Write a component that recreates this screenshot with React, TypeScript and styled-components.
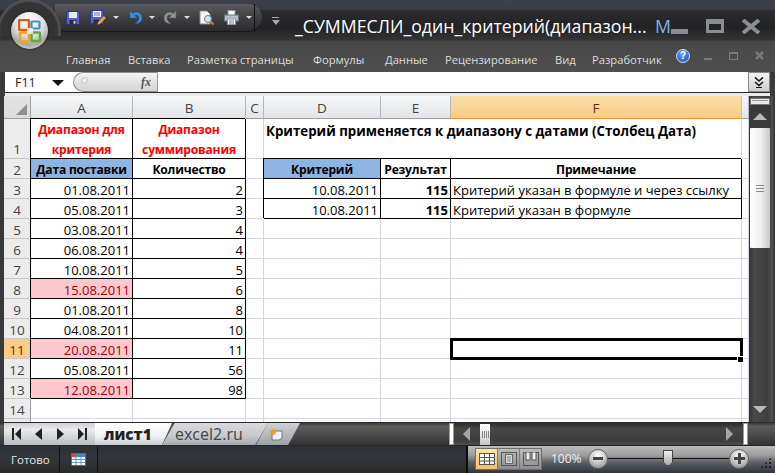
import React from "react";
import styled, { createGlobalStyle, css } from "styled-components";

const Global = createGlobalStyle`
  html, body { margin: 0; padding: 0; background: #333; }
  * { box-sizing: border-box; }
`;

const Win = styled.div`
  position: relative; width: 775px; height: 473px; overflow: hidden;
  display: flex; flex-direction: column; background: #3a3a3a;
  font-family: "Open Sans", "Noto Sans", sans-serif;
`;
const TitleBar = styled.div`
  height: 40px; flex: none; display: flex; align-items: flex-start; padding: 4px 0 0 55px;
  background: linear-gradient(#3c4149 0, #3a3f47 22%, #2a2b2e 28%, #232325 70%, #343436 100%);
`;
const Qat = styled.div`
  position: relative; width: 207px; height: 28px; display: flex; align-items: center;
  border-radius: 0 14px 14px 14px / 0 14px 14px 6px;
  background: linear-gradient(#5a5a5c, #3e3e40 55%, #2c2c2e);
  border-bottom: 1px solid #161616; padding-left: 11px;
`;
const QatSep = styled.i`
  position: absolute; left: 199px; top: 0; bottom: 0; width: 1px; background: #111;
`;
const QatIcon = styled.span<{ $gap?: number }>`
  display: inline-flex; margin-right: ${(p) => p.$gap ?? 0}px;
`;
const Caret = styled.i<{ $gap: number; $c?: string }>`
  width: 0; height: 0; margin-right: ${(p) => p.$gap}px;
  border-left: 3px solid transparent; border-right: 3px solid transparent;
  border-top: 3px solid ${(p) => p.$c ?? "#ddd"};
`;
const Customize = styled.div`
  width: 9px; margin: 13px 0 0 9px; display: flex; flex-direction: column; gap: 2px; align-items: center;
  &::before { content: ""; width: 7px; height: 1px; background: #aaa; }
  &::after { content: ""; border-left: 4px solid transparent; border-right: 4px solid transparent; border-top: 5px solid #aaa; }
`;
const Title = styled.div`
  margin: 10px 0 0 15px; width: 360px; white-space: nowrap; color: #fff; font-size: 17.7px; line-height: 24px;
`;
const TitleM = styled.span`
  margin: 10px 0 0 0; color: #7db4ee; font-size: 17.7px; line-height: 24px;
`;
const WinButtons = styled.div`
  margin-left: 0; display: flex; align-items: flex-start; color: #8a8f96;
`;
const MinBtn = styled.i`
  width: 17px; height: 5px; margin: 25px 18px 0 0; background: #888d94;
`;
const MaxBtn = styled.i`
  width: 18px; height: 14px; margin: 15px 18px 0 0; border: 3px solid #888d94; border-top-width: 5px;
`;
const Ribbon = styled.div`
  height: 32px; flex: none; position: relative; display: flex; align-items: center; padding: 6px 0 0 66px;
  background: linear-gradient(#484848, #4e4e4e);
  border-top: 1px solid #3c3c3c;
`;
const RibbonTab = styled.span<{ $w: number }>`
  width: ${(p) => p.$w}px; color: #dcdcdc; font-family: "Open Sans", sans-serif; font-size: 11.2px; white-space: nowrap;
`;
const RibbonCtl = styled.div`
  display: flex; align-items: center; margin: -8px 0 0 7px; gap: 0;
`;
const Help = styled.span`
  width: 14px; height: 14px; border-radius: 50%; background: radial-gradient(circle at 40% 30%, #6a9ff0, #1a4fb8);
  border: 1px solid #cfe0ff; color: #fff; font: bold 10px/12px "Liberation Sans", sans-serif; text-align: center; margin-right: 14px;
`;
const SmallMin = styled.i`width: 8px; height: 2px; background: #77797c; margin: 7px 17px 0 0;`;
const SmallRestore = styled.i`width: 9px; height: 8px; border: 1px solid #77797c; border-top-width: 2px; margin: 0 17px 0 0;`;
const FormulaBar = styled.div`
  height: 21px; flex: none; display: flex; margin: 0 5px; background: #fff; align-items: stretch;
  border-bottom: 1px solid #2d2d2d;
`;
const NameBox = styled.div`
  width: 68px; flex: none; display: flex; align-items: center; justify-content: space-between; padding: 1px 9px 0 10px;
  font-size: 12.5px; color: #222;
`;
const NameCaret = styled.i`
  border-left: 6px solid transparent; border-right: 6px solid transparent; border-top: 6px solid #111; margin-top: 1px;
`;
const FxPill = styled.div`
  width: 85px; flex: none; display: flex; align-items: center; justify-content: space-between; padding: 0 6px 0 7px;
  border-radius: 11px 0 0 11px; border: 1px solid #8d8d8d; border-right: 1px solid #9a9a9a;
  background: linear-gradient(#f4f4f4, #d4d4d4);
`;
const FxDot = styled.i`
  width: 7px; height: 7px; border-radius: 50%; background: radial-gradient(circle, #fff, #b5b5b5); margin-top: -4px;
`;
const Fx = styled.span`
  font: italic bold 12px "Liberation Serif", serif; color: #555;
`;
const FormulaInput = styled.div`flex: 1;`;
const Expand = styled.div`
  width: 22px; flex: none; background: linear-gradient(#f2f2f2, #cfcfcf); border: 1px solid #888;
  display: flex; align-items: center; justify-content: center;
`;
const Strip = styled.div`height: 3px; flex: none; margin: 0 5px; background: #e9edf2;`;
const SheetRow = styled.div`
  height: 326px; flex: none; display: flex; padding-left: 4px;
`;
const Grid = styled.div`
  width: 745px; height: 326px; overflow: hidden; background: #fff; display: grid;
  grid-template-columns: 27px 102px 113px 18px 117px 70px 291px 7px;
  grid-template-rows: 23px 40px repeat(14, 20px);
  font-family: "Open Sans", sans-serif; font-size: 13px; color: #000;
`;
const Corner = styled.div`
  background: linear-gradient(#e4e4e4, #dcdcdc); border-right: 1px solid #9e9e9e; border-bottom: 1px solid #9e9e9e;
  display: flex; align-items: flex-end; justify-content: flex-end; padding: 0 3px 3px 0;
`;
const ColHead = styled.div<{ $active?: boolean }>`
  display: flex; align-items: center; justify-content: center; font-size: 13.5px; color: #444; padding-top: 1px;
  background: linear-gradient(#f6f7f8, #e2e4e7); border-right: 1px solid #b4b8be; border-bottom: 1px solid #9e9e9e;
  ${(p) => p.$active && css`
    background: linear-gradient(#fadfa8, #f7cb84); border-right-color: #f5b868; border-bottom-color: #f29536; color: #6b2a10;
  `}
`;
const RowHead = styled.div<{ $active?: boolean; $tall?: boolean }>`
  display: flex; align-items: ${(p) => (p.$tall ? "flex-end" : "center")}; justify-content: center; font-size: 13.5px; color: #444; padding-top: 2px;
  background: #ececec; border-right: 1px solid #9e9e9e; border-bottom: 1px solid #c6c6c6;
  ${(p) => p.$active && css`background: #f8cd85; border-right-color: #f29536; color: #6b2a10;`}
`;
const Cell = styled.div<{
  $boxed?: boolean; $align?: string; $bold?: boolean; $fill?: string; $color?: string; $sel?: boolean; $span?: number;
}>`
  display: flex; align-items: center; white-space: nowrap; padding: 2px 2px 0; line-height: 20px;
  justify-content: ${(p) => (p.$align === "right" ? "flex-end" : p.$align === "center" ? "center" : "flex-start")};
  text-align: center;
  border-right: 1px solid #d0d7e5; border-bottom: 1px solid #d0d7e5;
  ${(p) => p.$span && css`grid-column: span ${p.$span};`}
  ${(p) => p.$bold && css`font-weight: 700; font-size: 12.1px; letter-spacing: -0.2px;`}
  ${(p) => p.$fill && css`background: ${p.$fill};`}
  ${(p) => p.$color && css`color: ${p.$color};`}
  ${(p) => p.$boxed && css`
    border-right-color: #000; border-bottom-color: #000; box-shadow: -1px -1px 0 #000; position: relative;
  `}
  ${(p) => p.$sel && css`
    position: relative; z-index: 1; border: 2px solid #000; box-shadow: 0 0 0 1px #000;
  `}
`;
const SheetHeading = styled(Cell)`
  align-items: flex-start; padding: 2px 0 0 2px; font-weight: 700; font-size: 13.3px;
`;
const BoldNum = styled(Cell)`font-weight: 700;`;
const Handle = styled.i`
  position: absolute; right: -3px; bottom: -5px; width: 5px; height: 5px; background: #000; box-shadow: 0 0 0 1px #fff;
`;
const VScroll = styled.div`
  width: 26px; flex: none; display: flex; flex-direction: column; align-items: center; padding-right: 4px;
  background: linear-gradient(90deg, #333 0, #4a4a4a 20%, #3e3e3e 70%, #505050 90%, #2c2c2c 100%);
`;
const VSplit = styled.div`
  width: 20px; height: 7px; margin-top: 2px; background: #e8e8e8; border: 1px solid #777; flex: none;
  &::after { content: ""; display: block; height: 1px; margin: 1px 1px; background: #9a9a9a; }
`;
const VUp = styled.div`
  flex: none; height: 23px; width: 100%; display: flex; align-items: center; justify-content: center; background: #3a3a3a;
`;
const Tri = styled.i<{ $dir: "up" | "down" | "left" | "right"; $c?: string }>`
  width: 0; height: 0; flex: none;
  ${(p) => p.$dir === "up" && css`border-left: 7px solid transparent; border-right: 7px solid transparent; border-bottom: 7px solid #b9b9b9;`}
  ${(p) => p.$dir === "down" && css`border-left: 7px solid transparent; border-right: 7px solid transparent; border-top: 7px solid #b9b9b9;`}
  ${(p) => p.$dir === "left" && css`border-top: 7px solid transparent; border-bottom: 7px solid transparent; border-right: 7px solid ${p.$c ?? "#a5a5a5"};`}
  ${(p) => p.$dir === "right" && css`border-top: 7px solid transparent; border-bottom: 7px solid transparent; border-left: 7px solid ${p.$c ?? "#a5a5a5"};`}
`;
const VThumb = styled.div`
  flex: none; width: 20px; height: 120px; display: flex; align-items: center; justify-content: center;
  background: linear-gradient(90deg, #fff, #f2f2f2 50%, #c8c8c8); border-radius: 1px;
`;
const Grip = styled.i`
  width: 8px; height: 7px; border-top: 1px solid #888; border-bottom: 1px solid #888;
  &::after { content: ""; display: block; height: 1px; margin-top: 2px; background: #888; }
`;
const VSpacer = styled.div`flex: 1;`;
const VDown = styled.div`flex: none; height: 16px; display: flex; align-items: flex-start;`;
const TabRow = styled.div`
  height: 23px; flex: none; display: flex; align-items: stretch; padding: 0 27px 0 4px;
  background: linear-gradient(#3a3a3a, #5c5c5c 15%, #484848 60%, #333);
  border-top: 1px solid #2c2c2c;
`;
const NavBox = styled.div`
  width: 91px; flex: none; display: flex; align-items: center; justify-content: space-between; padding: 0 8px 1px 8px;
  background: linear-gradient(#cfd2d6, #e8eaec 30%, #b9bcc1);
`;
const NavIcon = styled.span`display: inline-flex;`;
const SheetTabs = styled.div`width: 205px; flex: none; display: flex;`;
const ActiveTab = styled.div`
  width: 77px; flex: none; background: linear-gradient(#fff, #f1f1f3 60%, #c8ccd2);
  font-family: "Open Sans", sans-serif; font-weight: 800; font-size: 15.2px; color: #222; padding: 1px 0 0 9px; line-height: 20px;
  clip-path: polygon(0 0, 100% 0, 87% 100%, 0 100%);
`;
const SideTab = styled.div`
  width: 106px; margin-left: -10px; flex: none; background: linear-gradient(#d8dadd, #c6c8cc 60%, #a6a9ae);
  font-family: "Open Sans", sans-serif; font-size: 16px; color: #444; padding: 1px 0 0 13px; line-height: 20px; white-space: nowrap;
  clip-path: polygon(12% 0, 100% 0, 88% 100%, 0 100%);
`;
const NewTab = styled.div`
  width: 44px; margin-left: -12px; flex: none; background: linear-gradient(#cfd1d4, #9fa2a6);
  display: flex; align-items: center; padding-left: 13px;
  clip-path: polygon(27% 0, 100% 0, 73% 100%, 0 100%);
`;
const TabFill = styled.div`flex: 1;`;
const HSplit = styled.div`
  flex: none; width: 5px; background: #fff; border: 1px solid #9a9a9a;
`;
const HTrack = styled.div`
  width: 289px; flex: none; display: flex; align-items: center; padding: 0 10px 0 9px;
  background: linear-gradient(#2c2c2c, #474747 25%, #3d3d3d 80%, #4d4d4d);
`;
const HThumb = styled.div`
  width: 10px; height: 21px; flex: none; margin-left: 10px; display: flex; align-items: center; justify-content: center;
  background: linear-gradient(#fff, #e8e8e8 50%, #c4c4c4);
`;
const HGrip = styled.i`width: 7px; height: 7px; background: repeating-linear-gradient(90deg, #888 0 1px, transparent 1px 2px);`;
const HFill = styled.div`flex: 1;`;
const StatusBar = styled.div`
  flex: 1; display: flex; align-items: stretch; background: linear-gradient(#2e3138, #32353a 50%, #2a2a2a);
  border-top: 1px solid #22252b;
`;
const Ready = styled.div`
  width: 60px; padding: 1px 0 0 11px; flex: none; color: #e4e4e4; font-size: 11.5px; line-height: 25px; border-right: 1px solid #111;
`;
const Macro = styled.div`
  width: 38px; flex: none; display: flex; align-items: center; justify-content: center; border-right: 1px solid #111; padding-bottom: 1px;
`;
const StatusFill = styled.div`width: 370px; flex: none; border-right: 2px solid #0c0c0c;`;
const ZoomPanel = styled.div`
  flex: 1; display: flex; align-items: center; padding: 0 3px 2px 7px;
  background: linear-gradient(#bdbdbd, #9c9c9c 35%, #5c6066 60%, #30343c);
`;
const Views = styled.div`
  width: 67px; height: 22px; flex: none; display: flex; border: 1px solid #6e6e6e;
`;
const ViewBtn = styled.div<{ $active?: boolean }>`
  flex: 1; display: flex; align-items: center; justify-content: center; border-right: 1px solid #7a7a7a;
  background: ${(p) => (p.$active ? "linear-gradient(#fbe6a8, #f7bf5c)" : "linear-gradient(#bbb, #8b8d90)")};
  &:last-child { border-right: 0; }
`;
const Percent = styled.span`
  width: 37px; flex: none; margin-left: 9px; color: #f0f0f0; font-size: 12px; white-space: nowrap;
`;
const ZoomCircle = styled.div`
  width: 20px; height: 20px; flex: none; border-radius: 50%; border: 1px solid #666; display: flex; align-items: center; justify-content: center;
  background: radial-gradient(circle at 50% 30%, #fff, #c5c5c5 50%, #777);
`;
const Minus = styled.i`width: 10px; height: 3px; background: #444;`;
const Plus = styled.i`
  width: 11px; height: 11px; background:
    linear-gradient(#444, #444) center / 11px 3px no-repeat,
    linear-gradient(#444, #444) center / 3px 11px no-repeat;
`;
const SliderTrack = styled.div`
  flex: none; width: 121px; height: 1px; background: #111; position: relative;
`;
const SliderKnob = styled.i`
  position: absolute; left: 55px; top: -8px; width: 10px; height: 16px; background: linear-gradient(#eee, #aaa); border: 1px solid #444;
  clip-path: polygon(0 0, 100% 0, 100% 70%, 50% 100%, 0 70%);
`;
const Resize = styled.div`
  margin-left: 11px; width: 12px; height: 12px; margin-top: 8px; flex: none;
  background: radial-gradient(circle, #222 1px, transparent 1.3px) 0 0 / 4px 4px;
  clip-path: polygon(100% 0, 100% 100%, 0 100%);
`;
const OfficeHalo = styled.div`
  position: absolute; left: -4px; top: -2px; width: 66px; height: 66px; border-radius: 50%;
  background: radial-gradient(circle, #333 0 60%, #55555a 66%, transparent 70%);
  clip-path: inset(0 0 28px 0);
`;
const OfficeBtn = styled.div`
  position: absolute; left: 11px; top: 12px; width: 37px; height: 37px; border-radius: 50%;
  display: flex; align-items: center; justify-content: center;
  background: radial-gradient(circle at 50% 25%, #fff, #dedede 45%, #a8a8a8 70%, #f2f2f2);
  box-shadow: 0 0 2px #000;
`;
const CloseMark = styled.svg`flex: none; margin-top: 15px;`;

const Save = () => (
  <svg width="14" height="14" viewBox="0 0 14 14">
    <rect x="0.5" y="0.5" width="13" height="13" rx="1" fill="#5a62c8" stroke="#2e3488" />
    <rect x="3" y="1" width="8" height="6" fill="#e6ecfa" />
    <rect x="3.5" y="9" width="7" height="4.5" fill="#2a2a3c" />
    <rect x="7.5" y="9.8" width="2" height="3" fill="#c8ccd8" />
  </svg>
);
const SaveAs = () => (
  <svg width="16" height="15" viewBox="0 0 16 15">
    <rect x="0.5" y="0.5" width="13" height="13" rx="1" fill="#5a62c8" stroke="#2e3488" />
    <rect x="3" y="1" width="8" height="6" fill="#eef1fb" />
    <path d="M4 3h6M4 5h6" stroke="#778" />
    <rect x="3.5" y="9.5" width="6" height="4" fill="#2a2a3c" />
    <path d="M8 12l6-6 2 2-6 6-2.5.5z" fill="#e8a84a" stroke="#8a5a20" strokeWidth=".5" />
  </svg>
);
const Undo = () => (
  <svg width="13" height="15" viewBox="0 0 13 15">
    <path d="M1 1v7h7L5.5 5.5C8 4 10 5.5 10 8s-1.5 4-4 5.500c4 .5 7-2 7-5.500C13 3.500 8 .5 3.800 3.600z" fill="#3d8ee0" stroke="#1d5fa8" strokeWidth=".5" />
  </svg>
);
const Redo = () => (
  <svg width="13" height="15" viewBox="0 0 13 15">
    <path d="M12 1v7H5l2.500-2.500C5 4 3 5.500 3 8s1.500 4 4 5.500C3 14 0 11.500 0 8c0-4.500 5-7.500 9.200-4.400z" fill="#8a9298" stroke="#5e6468" strokeWidth=".5" />
  </svg>
);
const Preview = () => (
  <svg width="15" height="16" viewBox="0 0 15 16">
    <path d="M1 1h7l3 3v10H1z" fill="#f6f6f2" stroke="#8a8a8a" />
    <circle cx="9" cy="9" r="3.500" fill="#cfe6f7" stroke="#6d7a88" />
    <path d="M11.500 11.500L14.500 14.500" stroke="#c28a3a" strokeWidth="2" />
  </svg>
);
const Printer = () => (
  <svg width="15" height="15" viewBox="0 0 15 15">
    <rect x="4" y="0.500" width="7" height="5" fill="#fff" stroke="#8899aa" />
    <rect x="0.500" y="5" width="14" height="6" fill="#b5c0cc" stroke="#677" />
    <rect x="3.500" y="9" width="8" height="5.500" fill="#fff" stroke="#8899aa" />
    <path d="M5 11h5M5 13h5" stroke="#778" />
  </svg>
);
const Small = ({ c }: { c: string }) => (
  <svg width="9" height="9" viewBox="0 0 9 9"><path d="M1 1l7 7M8 1l-7 7" stroke={c} strokeWidth="2.500" /></svg>
);
const DoubleChevron = () => (
  <svg width="10" height="11" viewBox="0 0 10 11">
    <path d="M1 0.500l4 3.500 4-3.500M1 5l4 3.500L9 5" fill="none" stroke="#111" strokeWidth="1.600" />
    <path d="M2 10.500h6" stroke="#111" strokeWidth="1" />
  </svg>
);
const OfficeLogo = () => (
  <svg width="24" height="24" viewBox="0 0 24 24">
    <rect x="1" y="1" width="10" height="10" rx="1" fill="none" stroke="#d95b1e" strokeWidth="2.500" />
    <rect x="13.500" y="2.500" width="8" height="7" rx="1" fill="none" stroke="#3e8fd4" strokeWidth="2.200" />
    <rect x="2" y="13.500" width="9" height="9" rx="1" fill="none" stroke="#f3a51f" strokeWidth="2.500" />
    <rect x="13.500" y="13.500" width="8.500" height="8.500" rx="1" fill="none" stroke="#66a83a" strokeWidth="2.500" />
    <rect x="9" y="9" width="6" height="6" fill="#fff" opacity=".7" />
  </svg>
);
const NavFirst = () => (
  <svg width="9" height="12" viewBox="0 0 9 12"><path d="M0 0h2v12H0zM9 0v12L3 6z" fill="#222" /></svg>
);
const NavPrev = () => (<svg width="7" height="12" viewBox="0 0 7 12"><path d="M7 0v12L0 6z" fill="#222" /></svg>);
const NavNext = () => (<svg width="7" height="12" viewBox="0 0 7 12"><path d="M0 0v12l7-6z" fill="#222" /></svg>);
const NavLast = () => (
  <svg width="9" height="12" viewBox="0 0 9 12"><path d="M7 0h2v12H7zM0 0v12l6-6z" fill="#222" /></svg>
);
const NewSheet = () => (
  <svg width="14" height="13" viewBox="0 0 14 13">
    <path d="M3 3h10v7l-3 2H3z" fill="#eef3f8" stroke="#667788" />
    <path d="M4 0l1 2 2-1-1 2 2 1-2 1 1 2-2-1-1 2-1-2-2 1 1-2-2-1 2-1-1-2 2 1z" fill="#f0a020" />
  </svg>
);
const MacroIcon = () => (
  <svg width="15" height="13" viewBox="0 0 15 13">
    <rect x="0.500" y="0.500" width="14" height="12" fill="#fff" stroke="#3f6fb5" />
    <rect x="1" y="1" width="13" height="3" fill="#4f81c7" />
    <path d="M1 6.500h13M1 9.500h13M5 4v8M10 4v8" stroke="#6d93c9" />
    <circle cx="3" cy="2.500" r="2" fill="#e0433a" />
  </svg>
);
const ViewNormal = () => (
  <svg width="16" height="12" viewBox="0 0 16 12">
    <rect x="0.500" y="0.500" width="15" height="11" fill="#fff" stroke="#555" />
    <path d="M0 4.500h16M0 8h16M5.500 0v12M10.500 0v12" stroke="#555" />
  </svg>
);
const ViewLayout = () => (
  <svg width="16" height="14" viewBox="0 0 16 14">
    <rect x="0.500" y="0.500" width="15" height="13" fill="none" stroke="#555" />
    <rect x="4.500" y="2.500" width="7" height="9" fill="#d8d8d8" stroke="#666" />
    <path d="M6 5h4M6 7h4M6 9h4" stroke="#888" />
  </svg>
);
const ViewBreak = () => (
  <svg width="16" height="14" viewBox="0 0 16 14">
    <rect x="0.500" y="0.500" width="15" height="13" fill="none" stroke="#555" />
    <rect x="3" y="0" width="4" height="8" fill="#eee" stroke="#555" />
    <rect x="9" y="0" width="4" height="8" fill="#eee" stroke="#555" />
  </svg>
);

const BLUE = "#8db4e2";
const PINK = "#ffc7ce";
const DRED = "#9c0006";
const dates: [string, string, boolean][] = [
  ["01.08.2011", "2", false],
  ["05.08.2011", "3", false],
  ["03.08.2011", "4", false],
  ["06.08.2011", "4", false],
  ["10.08.2011", "5", false],
  ["15.08.2011", "6", true],
  ["01.08.2011", "8", false],
  ["04.08.2011", "10", false],
  ["20.08.2011", "11", true],
  ["05.08.2011", "56", false],
  ["12.08.2011", "98", true],
];
const cols = ["A", "B", "C", "D", "E", "F"];
const notes: Record<number, [string, string, string]> = {
  3: ["10.08.2011", "115", "Критерий указан в формуле и через ссылку"],
  4: ["10.08.2011", "115", "Критерий указан в формуле"],
};

const Rows = () => {
  const out: React.ReactNode[] = [];
  out.push(
    <RowHead key="h1" $tall>1</RowHead>,
    <Cell key="a1" $boxed $align="center" $bold $color="#ff0000">Диапазон для<br />критерия</Cell>,
    <Cell key="b1" $boxed $align="center" $bold $color="#ff0000">Диапазон<br />суммирования</Cell>,
    <Cell key="c1" />,
    <SheetHeading key="d1" $span={3}>Критерий применяется к диапазону с датами (Столбец Дата)</SheetHeading>,
    <Cell key="g1" />
  );
  out.push(
    <RowHead key="h2">2</RowHead>,
    <Cell key="a2" $boxed $align="center" $bold $fill={BLUE}>Дата поставки</Cell>,
    <Cell key="b2" $boxed $align="center" $bold>Количество</Cell>,
    <Cell key="c2" />,
    <Cell key="d2" $boxed $align="center" $bold $fill={BLUE}>Критерий</Cell>,
    <Cell key="e2" $boxed $align="center" $bold>Результат</Cell>,
    <Cell key="f2" $boxed $align="center" $bold>Примечание</Cell>,
    <Cell key="g2" />
  );
  for (let r = 3; r <= 15; r++) {
    const d = dates[r - 3];
    const n = notes[r];
    const active = r === 11;
    out.push(<RowHead key={`h${r}`} $active={active}>{r < 15 ? r : ""}</RowHead>);
    if (d) {
      out.push(
        <Cell key={`a${r}`} $boxed $align="right" $fill={d[2] ? PINK : undefined} $color={d[2] ? DRED : undefined}>{d[0]}</Cell>,
        <Cell key={`b${r}`} $boxed $align="right">{d[1]}</Cell>
      );
    } else {
      out.push(<Cell key={`a${r}`} />, <Cell key={`b${r}`} />);
    }
    out.push(<Cell key={`c${r}`} />);
    if (n) {
      out.push(
        <Cell key={`d${r}`} $boxed $align="right">{n[0]}</Cell>,
        <BoldNum key={`e${r}`} $boxed $align="right">{n[1]}</BoldNum>,
        <Cell key={`f${r}`} $boxed>{n[2]}</Cell>
      );
    } else {
      out.push(
        <Cell key={`d${r}`} />,
        <Cell key={`e${r}`} />,
        active ? <Cell key={`f${r}`} $sel><Handle /></Cell> : <Cell key={`f${r}`} />
      );
    }
    out.push(<Cell key={`g${r}`} />);
  }
  return <>{out}</>;
};

const tabs: [string, number][] = [
  ["Главная", 62], ["Вставка", 59], ["Разметка страницы", 126], ["Формулы", 72],
  ["Данные", 60], ["Рецензирование", 110], ["Вид", 37], ["Разработчик", 77],
];

export default function App() {
  return (
    <Win>
      <Global />
      <TitleBar>
        <Qat>
          <QatIcon $gap={10}><Save /></QatIcon>
          <QatIcon $gap={7}><SaveAs /></QatIcon>
          <Caret $gap={10} />
          <QatIcon $gap={7}><Undo /></QatIcon>
          <Caret $gap={9} />
          <QatIcon $gap={7}><Redo /></QatIcon>
          <Caret $gap={9} />
          <QatIcon $gap={10}><Preview /></QatIcon>
          <QatIcon $gap={7}><Printer /></QatIcon>
          <Caret $gap={0} />
          <QatSep />
        </Qat>
        <Customize />
        <Title>_СУММЕСЛИ_один_критерий(диапазон...</Title>
        <TitleM>M</TitleM>
        <WinButtons>
          <MinBtn />
          <MaxBtn />
          <CloseMark width="18" height="15" viewBox="0 0 18 15">
            <path d="M1 1l16 13M17 1L1 14" stroke="#888d94" strokeWidth="4" />
          </CloseMark>
        </WinButtons>
      </TitleBar>
      <Ribbon>
        {tabs.map(([t, w]) => <RibbonTab key={t} $w={w}>{t}</RibbonTab>)}
        <RibbonCtl>
          <Help>?</Help>
          <SmallMin />
          <SmallRestore />
          <Small c="#77797c" />
        </RibbonCtl>
      </Ribbon>
      <FormulaBar>
        <NameBox>F11<NameCaret /></NameBox>
        <FxPill><FxDot /><Fx>fx</Fx></FxPill>
        <FormulaInput />
        <Expand><DoubleChevron /></Expand>
      </FormulaBar>
      <Strip />
      <SheetRow>
        <Grid>
          <Corner>
            <svg width="11" height="11" viewBox="0 0 11 11"><path d="M11 0v11H0z" fill="#8f8f8f" /></svg>
          </Corner>
          {cols.map((c) => <ColHead key={c} $active={c === "F"}>{c}</ColHead>)}
          <ColHead />
          <Rows />
        </Grid>
        <VScroll>
          <VSplit />
          <VUp><Tri $dir="up" /></VUp>
          <VThumb><Grip /></VThumb>
          <VSpacer />
          <VDown><Tri $dir="down" /></VDown>
        </VScroll>
      </SheetRow>
      <TabRow>
        <NavBox>
          <NavIcon><NavFirst /></NavIcon>
          <NavIcon><NavPrev /></NavIcon>
          <NavIcon><NavNext /></NavIcon>
          <NavIcon><NavLast /></NavIcon>
        </NavBox>
        <SheetTabs>
          <ActiveTab>лист1</ActiveTab>
          <SideTab>excel2.ru</SideTab>
          <NewTab><NewSheet /></NewTab>
        </SheetTabs>
        <TabFill />
        <HSplit />
        <HTrack>
          <Tri $dir="left" />
          <HThumb><HGrip /></HThumb>
          <HFill />
          <Tri $dir="right" />
        </HTrack>
        <HSplit />
      </TabRow>
      <StatusBar>
        <Ready>Готово</Ready>
        <Macro><MacroIcon /></Macro>
        <StatusFill />
        <ZoomPanel>
          <Views>
            <ViewBtn $active><ViewNormal /></ViewBtn>
            <ViewBtn><ViewLayout /></ViewBtn>
            <ViewBtn><ViewBreak /></ViewBtn>
          </Views>
          <Percent>100%</Percent>
          <ZoomCircle><Minus /></ZoomCircle>
          <SliderTrack><SliderKnob /></SliderTrack>
          <ZoomCircle><Plus /></ZoomCircle>
          <Resize />
        </ZoomPanel>
      </StatusBar>
      <OfficeHalo />
      <OfficeBtn><OfficeLogo /></OfficeBtn>
    </Win>
  );
}
